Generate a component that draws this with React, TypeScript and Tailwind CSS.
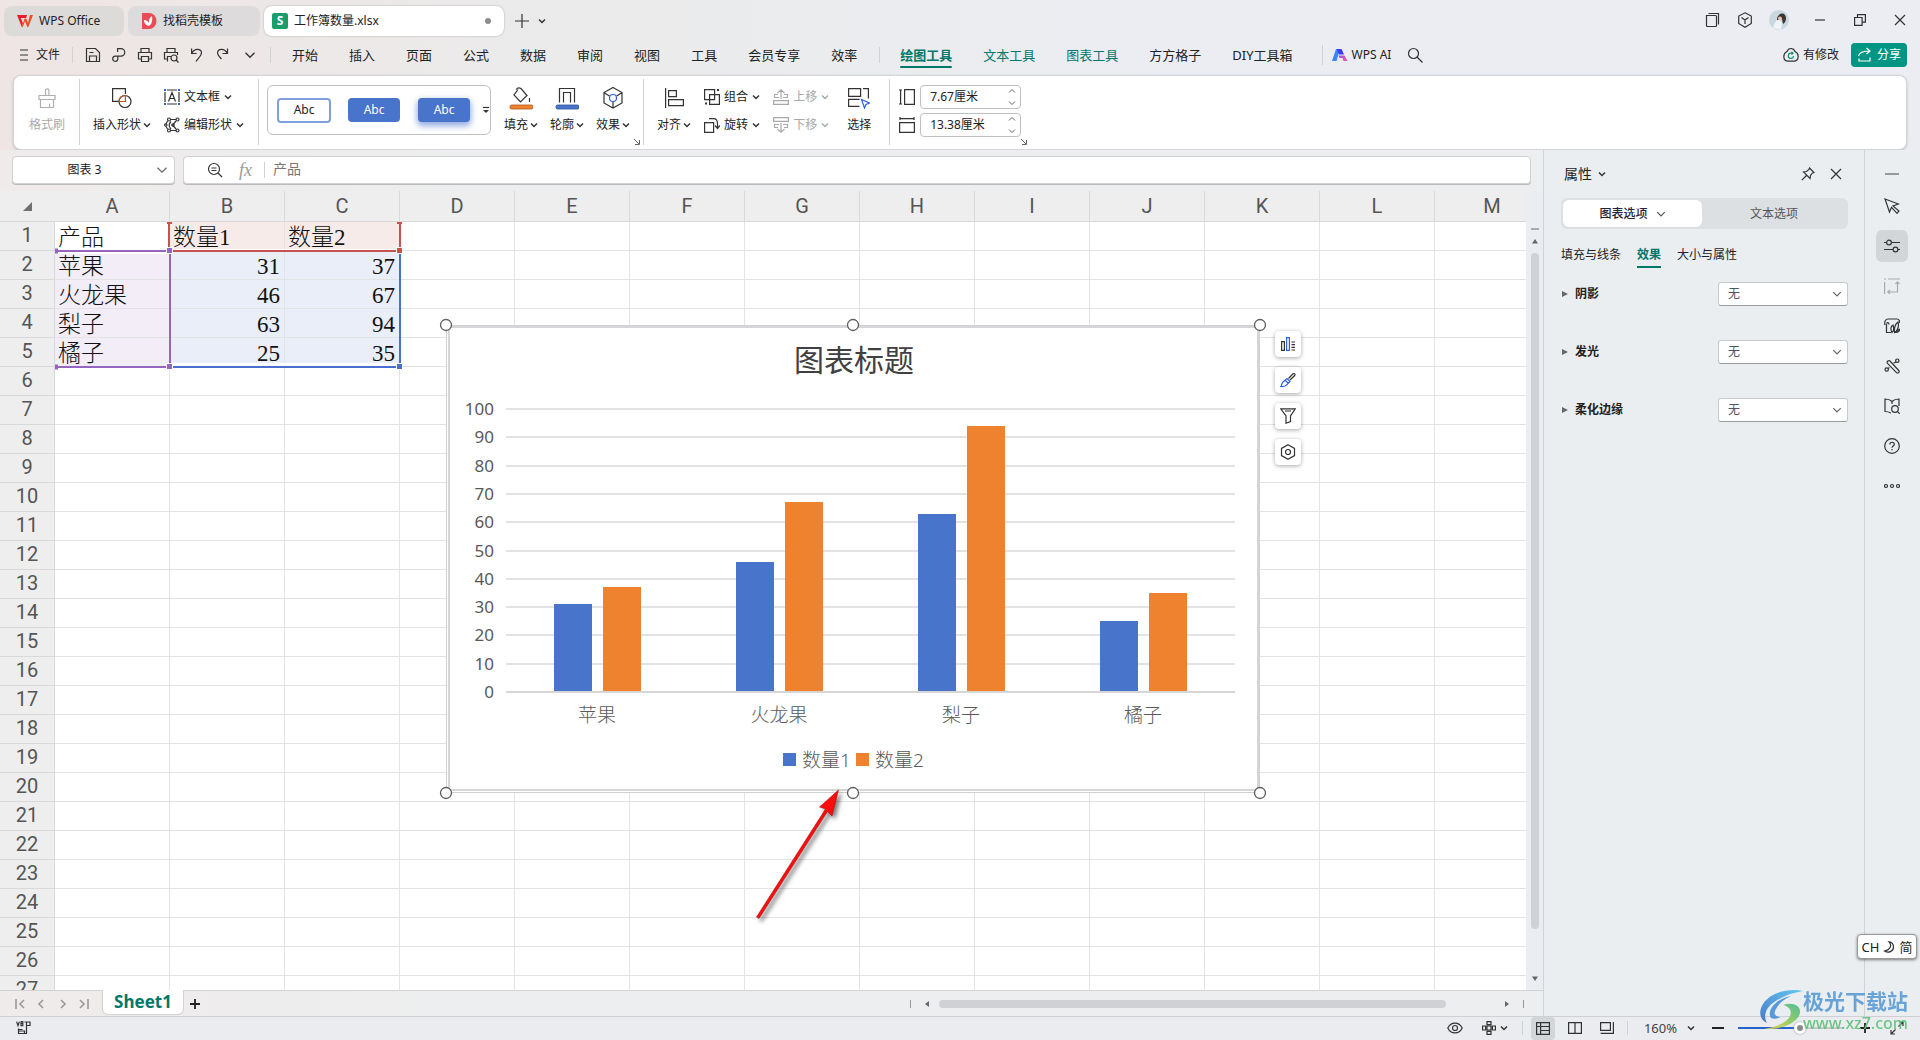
import React from "react";

type IcoProps = { w?: number; h?: number; box?: string; c?: string; sw?: number; children: React.ReactNode };
const Ico = ({ w = 16, h, box, c = "#333", sw = 1.2, children }: IcoProps) => (
  <svg
    width={w}
    height={h ?? w}
    viewBox={box ?? `0 0 ${w} ${h ?? w}`}
    fill="none"
    stroke={c}
    strokeWidth={sw}
    className="shrink-0"
    aria-hidden="true"
  >
    {children}
  </svg>
);
const Chev = ({ w = 8, c = "#333", sw = 1.5 }: { w?: number; c?: string; sw?: number }) => (
  <Ico w={w} box="0 0 8 8" c={c} sw={sw}>
    <path d="M1 2.5 4 5.5 7 2.5" />
  </Ico>
);
const VSep = ({ cls }: { cls: string }) => <span className={`w-px shrink-0 bg-[#d0d1d4] ${cls}`} />;

/* ---------- title bar ---------- */
const TitleBar = () => (
  <header className="flex h-[37px] shrink-0 pt-[6px] pl-1">
    <button className="flex h-[30px] w-[120px] items-center gap-[6px] rounded-lg bg-[#dddada] pl-[13px]">
      <Ico w={16} h={14} sw={0}>
        <path fill="#e5202b" d="M0 1h10L9.200 4H3.800l2.200 5.500L4.800 13 0 1Z" />
        <path fill="#f04a1e" d="M13 1h3l-4.700 12h-1L8 7l-2.200 6h-1L7.600 4.500h1.600L11 9l2-8Z" />
      </Ico>
      WPS Office
    </button>
    <button className="ml-1 flex h-[30px] w-[132px] items-center gap-[6px] rounded-lg bg-[#dddbdb] pl-[13px]">
      <Ico w={16} sw={0}>
        <path fill="#e84d54" d="M1 0h7a7.500 8 0 0 1 0 16H1Z" />
        <path fill="#fff" d="M8 13C4 12 3 9 3 7c2 0 4 1 5 3C7.500 7 8.500 4.500 11 3c.5 3 .5 8-3 10Z" />
      </Ico>
      找稻壳模板
    </button>
    <button className="ml-1 flex h-[30px] w-[240px] items-center gap-[6px] rounded-lg bg-white pr-[13px] pl-2 shadow-[0_0_2px_rgba(0,0,0,0.3)]">
      <span className="flex size-4 items-center justify-center rounded-[2px] bg-[#1a9c6b] text-[12px] leading-4 font-bold text-white">S</span>
      工作簿数量.xlsx
      <span className="ml-auto size-[6px] rounded-full bg-[#8d8d8d]" />
    </button>
    <button aria-label="新建" className="ml-[11px] flex h-[30px] items-center">
      <Ico w={14}><path d="M7 0v14M0 7h14" /></Ico>
    </button>
    <button aria-label="标签列表" className="ml-[9px] flex h-[30px] items-center"><Chev /></button>
    <div className="ml-auto flex h-[28px] items-center">
      <button aria-label="窗口"><Ico w={16}><path d="M3.500 1.500h10v11M1.500 3.500h9a1 1 0 0 1 1 1v9a1 1 0 0 1-1 1h-8a1 1 0 0 1-1-1Z" /></Ico></button>
      <button aria-label="应用" className="ml-4"><Ico w={16}><path d="M8 .8 14.300 4v7.500L8 15.200 1.700 11.500V4ZM4.500 5.500 8 8l3.500-2.500M8 8v4" /></Ico></button>
      <button aria-label="账户" className="ml-4">
        <Ico w={20} sw={0}>
          <circle cx="10" cy="10" r="10" fill="#c9d8de" />
          <path d="M10 5c3-3 7-1 7 3 0 3-1 5-3 6l-1-5-5 2c0-3 0-4 2-6Z" fill="#3d3434" />
          <path d="M8 10c2 0 4 0 5 4l-1 5.800L4 18c1-3 2-6 4-8Z" fill="#eef4f7" />
          <circle cx="11" cy="8.500" r="2" fill="#e7c4b5" />
        </Ico>
      </button>
      <button aria-label="最小化" className="ml-[25px]"><Ico w={12}><path d="M1 6h10" /></Ico></button>
      <button aria-label="还原" className="ml-[28px]"><Ico w={12}><path d="M.6 3.500h7.500v7.900H.6ZM3.500 3.500V.6h7.900v7.500H8" /></Ico></button>
      <button aria-label="关闭" className="mr-[14px] ml-[28px]"><Ico w={12}><path d="m1 1 10 10M11 1 1 11" /></Ico></button>
    </div>
  </header>
);

/* ---------- menu bar ---------- */
const menus = ["开始", "插入", "页面", "公式", "数据", "审阅", "视图", "工具", "会员专享", "效率"];

const MenuBar = () => (
  <nav className="flex h-[36px] shrink-0 items-center pl-5">
    <button className="flex items-center gap-2">
      <Ico w={8} h={12}><path d="M0 1h8M0 6h8M0 11h8" /></Ico>文件
    </button>
    <VSep cls="ml-3 h-4" />
    <div className="ml-3 flex items-center gap-[10px]">
      <button aria-label="保存"><Ico w={16}><path d="M1.500 1.500h9l4 4v9h-13ZM4.500 5.500h4M4.500 14v-5h7v5" /></Ico></button>
      <button aria-label="输出"><Ico w={16}><path d="M6.600 5V1.600h3.400a3.700 3.700 0 0 1 0 7.500H4.500a2.600 2.600 0 1 0 2.300 3.400V9.100" /></Ico></button>
      <button aria-label="打印"><Ico w={16}><path d="M4 5V1.500h8V5M4 12H1.500V5.500h13V12H12M4.500 9.500h7v5h-7Z" /></Ico></button>
      <button aria-label="打印预览"><Ico w={16}><path d="M4 5V1.500h8V5M4 12H1.500V5.500h13V8M4.500 14.500v-5H8" /><circle cx="11" cy="11" r="3" /><path d="m13 13 2.500 2.500" /></Ico></button>
      <button aria-label="撤销"><Ico w={16}><path d="M2.600 1.500v5h5M2.600 6.500C5.500 1 12 1.500 12.500 5.500c.3 3.500-3 5-5.500 9" /></Ico></button>
      <button aria-label="恢复"><Ico w={16}><path d="M12.500 1.500v5h-5M12.500 6.500C9.500 1 3 1.500 2.600 5.500 2.400 8 4 9.500 6.500 12" /></Ico></button>
      <button aria-label="更多" className="pl-[3px]"><Chev w={12} sw={0.9} /></button>
    </div>
    <VSep cls="ml-[14px] h-4" />
    <div className="ml-[21px] flex items-center gap-[31px] text-[13px]">
      {menus.map((m) => <button key={m} className="whitespace-nowrap">{m}</button>)}
    </div>
    <VSep cls="ml-[22px] h-4" />
    <div className="ml-5 flex items-center gap-[31px] text-[13px] whitespace-nowrap text-[#00796b]">
      <button className="relative font-bold">
        绘图工具
        <span className="absolute inset-x-0 -bottom-1 h-[2px] rounded bg-[#00796b]" />
      </button>
      <button>文本工具</button>
      <button>图表工具</button>
      <button className="text-[#222]">方方格子</button>
      <button className="text-[#222]">DIY工具箱</button>
    </div>
    <VSep cls="ml-[29px] h-5" />
    <button className="ml-[9px] flex items-center gap-1 whitespace-nowrap">
      <svg width="16" height="12" viewBox="0 0 16 12" aria-hidden="true">
        <defs>
          <linearGradient id="ai" x1="0" x2="1"><stop offset="0" stopColor="#8a5cf0" /><stop offset="1" stopColor="#ff4fa0" /></linearGradient>
        </defs>
        <path d="M4 0h4L4.500 12H0Z" fill="#3a86ff" />
        <path d="M5 0h4.500l2.500 5.500H7L5.500 2Z" fill="#3b3cf2" />
        <path d="M6.500 6.500h6L15.500 12h-4L10.500 9H7.500Z" fill="url(#ai)" />
      </svg>
      WPS AI
    </button>
    <button aria-label="搜索" className="ml-4"><Ico w={16}><circle cx="6.500" cy="6.500" r="5" /><path d="m10 10 5.500 5.500" /></Ico></button>
    <button className="ml-auto flex items-center gap-1 whitespace-nowrap">
      <Ico w={16}><path d="M8 1.500c2.500 0 3.500 1.500 4 3C14 5.500 15.200 7 15.200 9.500c0 3-2 4.700-4.200 4.700H5C2.500 14.200.8 12.500.8 9.500.8 7 2 5.500 4 4.500c.5-1.500 1.500-3 4-3Z" /><path stroke="#0a9a6e" d="M10.500 9A2.600 2.600 0 1 1 8 6.200h1.500M8.500 4.700 10 6.200 8.500 7.700" /></Ico>
      有修改
    </button>
    <button className="mr-[13px] ml-3 flex h-6 w-14 items-center justify-center gap-1 rounded bg-[#009683] whitespace-nowrap text-white">
      <Ico w={16} c="#fff"><path d="M1.500 9C2.500 5.500 6 4 12.500 4M9.500 1l3.500 3-3.500 3M2 11.500V14h11v-3.500" /></Ico>
      分享
    </button>
  </nav>
);

/* ---------- ribbon ---------- */
const Big = ({ icon, label, drop, cls, off }: { icon: React.ReactNode; label: string; drop?: boolean; cls: string; off?: boolean }) => (
  <button className={`flex shrink-0 flex-col items-center pt-[3px] ${cls} ${off ? "text-[#a9a9a9]" : ""}`}>
    <span className="flex h-6 items-center justify-center">{icon}</span>
    <span className="mt-[6px] flex h-[18px] items-center gap-[2px] whitespace-nowrap">{label}{drop && <Chev />}</span>
  </button>
);
const Small = ({ icon, label, off }: { icon: React.ReactNode; label: string; off?: boolean }) => (
  <button className={`flex h-7 items-center gap-1 whitespace-nowrap ${off ? "text-[#a9a9a9]" : ""}`}>
    {icon}{label}<Chev c={off ? "#a9a9a9" : "#333"} />
  </button>
);
const Corner = () => <Ico w={6} c="#666" sw={1}><path d="m0 0 5 5M5.500 1v4.500H1" /></Ico>;
const Size = ({ icon, label, value }: { icon: React.ReactNode; label: string; value: string }) => (
  <div className="flex h-7 items-center gap-[5px]">
    {icon}
    <div className="flex h-6 w-[101px] items-center rounded border border-[#bfc0c2] bg-white pr-1 pl-[9px]">
      <input aria-label={label} defaultValue={value} className="w-0 flex-1 outline-none" />
      <span className="flex flex-col gap-1">
        <button aria-label="增加" className="rotate-180"><Chev w={8} c="#666" sw={1} /></button>
        <button aria-label="减少"><Chev w={8} c="#666" sw={1} /></button>
      </span>
    </div>
  </div>
);

const Ribbon = () => (
  <section className="mx-[13px] mt-[2px] flex h-[75px] shrink-0 rounded-lg border border-[#d4d5d8] bg-white pt-[7px] pl-[15px] shadow-[0_1px_3px_rgba(0,0,0,0.18)]">
    <Big cls="" off label="格式刷" icon={<Ico w={20} h={22} c="#b0b0b0"><path d="M2 8.500h16v4H2ZM3.500 12.500v8h13v-8M8.500 8V3.500a1.700 1.700 0 0 1 3.400 0V8M12.500 20v-3.500" /></Ico>} />
    <VSep cls="-mt-1 ml-[14px] h-[66px]" />
    <Big cls="ml-[13px]" drop label="插入形状" icon={<Ico w={22}><path d="M8 14.400H1.600V1.600h12.800V7" /><circle cx="14" cy="14.500" r="6" /><path stroke="#c8551b" d="M14.400 8.500v6H8.200c0-3.500 2.500-6 6.200-6Z" /></Ico>} />
    <div className="ml-[13px]">
      <Small label="文本框" icon={<Ico w={16}><path d="M1 3v10M15 3v10M3 1h10M3 15h10M4.500 12.500 8 3.500l3.500 9M5.800 9.500h4.400" /><path stroke="#2f62e0" strokeWidth="2" d="M0 1h2M14 1h2M0 15h2M14 15h2" /></Ico>} />
      <Small label="编辑形状" icon={<Ico w={16}><path d="M6 2.500h6.500M6 13.500h6.500M3.500 4 2 7M3.500 12 2 9.500M12 4l-3 3.500v1L12 12M7 4.500C4.500 7 4.500 9.500 7 12" /><circle cx="5" cy="2.500" r="1.500" /><circle cx="13.500" cy="2.500" r="1.500" /><circle cx="1.800" cy="8" r="1.200" /><circle cx="5" cy="13.500" r="1.500" /><circle cx="13.500" cy="13.500" r="1.500" /><circle cx="9" cy="8" r="1.200" /></Ico>} />
    </div>
    <VSep cls="-mt-1 ml-[14px] h-[66px]" />
    <div className="mt-[2px] ml-2 flex h-[50px] w-[224px] shrink-0 items-center rounded-md border border-[#bfc0c2] pl-[9px]">
      <button className="h-[25px] w-[54px] rounded border-2 border-[#7f9fdf] bg-white">Abc</button>
      <button className="ml-[17px] h-6 w-[52px] rounded bg-[#4874cb] text-white">Abc</button>
      <button className="ml-[18px] h-6 w-[52px] rounded bg-[#4874cb] text-white shadow-[0_3px_6px_1px_rgba(72,116,203,0.6)]">Abc</button>
      <button aria-label="更多样式" className="ml-3"><Ico w={8}><path d="M1 1.500h6" /><path d="M1 4h6L4 7Z" fill="#333" stroke="none" /></Ico></button>
    </div>
    <Big cls="ml-[13px]" drop label="填充" icon={<Ico w={24}><path d="M9 3.500 5 9l6.500 7 6.500-6.500L12 2.500Q9 1 7 3.500M20.500 12v4" /><rect x="1" y="19" width="23" height="4" rx="1.500" fill="#f08131" stroke="#a85a1c" strokeWidth=".8" /></Ico>} />
    <Big cls="ml-3" drop label="轮廓" icon={<Ico w={24}><path d="M4.500 16.500v-14h15v14M8.500 16.500v-10h7v10" /><rect x="1" y="19" width="23" height="4" rx="1.500" fill="#4874cb" stroke="#2f4f94" strokeWidth=".8" /></Ico>} />
    <Big cls="ml-3" drop label="效果" icon={<Ico w={22} h={24}><path d="m11 1.500 9 5v10.500l-9 5-9-5V6.500ZM2.500 7l5 3M19.500 7l-5 3M11 15.500v6" /><circle cx="11" cy="12" r="3.500" stroke="#2f62e0" /></Ico>} />
    <div className="flex w-[13px] items-end justify-center pb-1"><Corner /></div>
    <VSep cls="-mt-1 h-[66px]" />
    <Big cls="ml-[13px]" drop label="对齐" icon={<Ico w={20}><path d="M1.600 0v20M4.600 2.600h7.800v6H4.600ZM4.600 11.600h14.800v6H4.600Z" /></Ico>} />
    <div className="ml-[13px]">
      <Small label="组合" icon={<Ico w={16}><path d="M.6.6h10v10H.6ZM5.600 5.600h9.800v9.800H5.600Z" /><path strokeWidth="2" d="M13 1h2M1 14.500h2" /></Ico>} />
      <Small label="旋转" icon={<Ico w={16}><path d="M.6 5.600h9v9.800h-9ZM5 1.600h4.500c3 0 4 2 4 5V11M11 8.500l2.500 3 2.500-3" /></Ico>} />
    </div>
    <div className="ml-[13px]">
      <Small off label="上移" icon={<Ico w={16} c="#a9a9a9"><path d="M.6 11.600h14.800v3.800H.6ZM6 8.500H1.500v-3H5M10 8.500h4.500v-3H11M8 10V1M4.500 4 8 .8 11.500 4" /></Ico>} />
      <Small off label="下移" icon={<Ico w={16} c="#a9a9a9"><path d="M.6.6h14.800v3.800H.6ZM6 7.500H1.500v3H5M10 7.500h4.500v3H11M8 6v9M4.500 12 8 15.200l3.500-3.200" /></Ico>} />
    </div>
    <Big cls="ml-[18px]" label="选择" icon={<Ico w={22}><path d="M.6 9.400V1.600h12v7.800ZM15 1.600h5.400v10M11.500 19.400H.6v-7h11" /><path d="m13.500 12.500 8 3.500-3.500 1.500-1.500 3.500Z" stroke="#2f62e0" /></Ico>} />
    <VSep cls="-mt-1 ml-[18px] h-[66px]" />
    <div className="ml-[9px]">
      <Size label="高度" value="7.67厘米" icon={<Ico w={16}><path d="M1.600 1v14M5.600.6h9.800v14.800H5.600ZM0 1h3M0 15h3" /></Ico>} />
      <Size label="宽度" value="13.38厘米" icon={<Ico w={16}><path d="M1 1.600h14M.6 5.600h14.800v9.800H.6ZM1 0v3M15 0v3" /></Ico>} />
    </div>
    <div className="flex items-end pb-1"><Corner /></div>
  </section>
);

/* ---------- formula bar ---------- */
const FormulaBar = () => (
  <div className="mt-[6px] flex h-7 shrink-0 gap-2 pr-3 pl-3">
    <div className="flex w-[163px] items-center rounded border border-[#d0d1d3] bg-white pr-[6px] shadow-[0_1px_0_#bbb]">
      <input aria-label="名称框" defaultValue="图表 3" className="w-0 flex-1 text-center outline-none" />
      <button aria-label="展开"><Chev w={12} c="#666" sw={0.8} /></button>
    </div>
    <div className="flex flex-1 items-center rounded border border-[#d0d1d3] bg-white pl-[23px] text-[#777] shadow-[0_1px_0_#bbb]">
      <Ico w={16}><circle cx="7" cy="7" r="5.500" /><path d="m11 11 4 4M4.500 6h5M4.500 8.500h5" /></Ico>
      <span className="ml-4 font-['Liberation_Serif'] text-[18px] italic text-[#999]">fx</span>
      <VSep cls="ml-3 h-4" />
      <input aria-label="编辑栏" defaultValue="产品" className="ml-2 flex-1 pb-[2px] text-[14px] outline-none" />
    </div>
  </div>
);

/* ---------- sheet ---------- */
const columns = ["A", "B", "C", "D", "E", "F", "G", "H", "I", "J", "K", "L", "M"];
const cells: string[][] = [
  ["产品", "数量1", "数量2"],
  ["苹果", "31", "37"],
  ["火龙果", "46", "67"],
  ["梨子", "63", "94"],
  ["橘子", "25", "35"],
];
const tint = (r: number, c: number) => {
  if (c > 2 || r > 4) return "";
  if (r === 0) return c === 0 ? "" : "bg-[#f7ebea]";
  return c === 0 ? "bg-[#f2edf7]" : "bg-[#e9eef9]";
};

const Grid = () => (
  <table className="w-[1550px] table-fixed border-separate border-spacing-0">
    <colgroup>
      <col className="w-[55px]" />
      {columns.map((c) => <col key={c} className="w-[115px]" />)}
    </colgroup>
    <thead>
      <tr className="h-[31px] bg-[#eeeeee] font-[Roboto,sans-serif] text-[20px] leading-6 text-[#555]">
        <th className="border-b border-[#d8d9da]" aria-label="全选">
          <span className="ml-[23px] block size-0 border-b-[9px] border-l-[9px] border-b-[#707070] border-l-transparent" />
        </th>
        {columns.map((c) => (
          <th key={c} scope="col" className="border-r border-b border-[#d8d9da] p-0 font-normal">{c}</th>
        ))}
      </tr>
    </thead>
    <tbody>
      {Array.from({ length: 27 }, (_, r) => (
        <tr key={r} className="h-[29px]">
          <th scope="row" className="border-r border-b border-[#d8d9da] bg-[#eeeeee] p-0 pb-[2px] font-[Roboto,sans-serif] text-[20px] leading-6 font-normal text-[#555]">{r + 1}</th>
          {columns.map((c, i) => {
            const v = cells[r]?.[i] ?? "";
            return (
              <td key={c} className={`overflow-hidden border-r border-b border-[#e2e3e5] pt-1 pr-1 pb-0 pl-[3px] font-['Liberation_Serif','Noto_Sans_CJK_SC',serif] text-[23px] leading-6 font-light whitespace-nowrap text-[#111] ${tint(r, i)} ${/^\d/.test(v) ? "text-right" : ""}`}>{v}</td>
            );
          })}
        </tr>
      ))}
    </tbody>
  </table>
);

/* coloured outlines of the ranges that feed the chart */
const Ranges = () => (
  <svg className="pointer-events-none absolute top-0 left-0" width="420" height="190" fill="none" aria-hidden="true">
    <path d="M56 61h113M173 174h226" stroke="#fff" strokeWidth="4" />
    <path d="M400 60v116" stroke="#4a6fd0" strokeWidth="2" />
    <path d="M173 176h228" stroke="#4a6fd0" strokeWidth="2" />
    <path d="M169 32v25M400 32v25M173 60h226" stroke="#c8504f" strokeWidth="2" />
    <path d="M173 58.500h223" stroke="#fff" />
    <path d="M56 60h110M170 62v111M56 176h110" stroke="#9466c0" strokeWidth="2" />
    <path d="M55 60h3M55 176h3" stroke="#9466c0" strokeWidth="5" />
    <path d="M167 32h5M397 32h5" stroke="#c8504f" strokeWidth="2" />
    <g stroke="#fff">
      <rect x="166.500" y="56.500" width="6" height="6" fill="#9466c0" />
      <rect x="166.500" y="172.500" width="6" height="6" fill="#9466c0" />
      <rect x="396.500" y="56.500" width="6" height="6" fill="#c8504f" />
      <rect x="396.500" y="172.500" width="6" height="6" fill="#4a6fd0" />
    </g>
  </svg>
);

const series = [
  { name: "苹果", a: 31, b: 37 },
  { name: "火龙果", a: 46, b: 67 },
  { name: "梨子", a: 63, b: 94 },
  { name: "橘子", a: 25, b: 35 },
];
const yOf = (v: number) => Math.round(367 - v * 2.83);

const Chart = () => (
  <svg className="absolute top-[134px] left-[446px] overflow-visible" width="814" height="468" role="img" aria-label="图表标题">
    <rect x=".5" y=".5" width="813" height="467" fill="#fff" stroke="#cfd0d3" />
    <rect x="3" y="2" width="809" height="463" fill="#fff" stroke="#d6d6d8" strokeWidth="2" />
    <text x="408" y="46" textAnchor="middle" fontSize="30" fill="#404040">图表标题</text>
    {Array.from({ length: 11 }, (_, i) => (
      <g key={i}>
        <rect x="60" y={yOf(i * 10) - 1} width="729" height="2" fill={i ? "#e3e3e3" : "#d6d6d6"} />
        <text x="48" y={yOf(i * 10) + 6} textAnchor="end" fontSize="17" fill="#595959">{i * 10}</text>
      </g>
    ))}
    {series.map((s, i) => (
      <g key={s.name}>
        <rect x={108 + i * 182} y={yOf(s.a)} width="38" height={366 - yOf(s.a)} fill="#4874cb" />
        <rect x={157 + i * 182} y={yOf(s.b)} width="38" height={366 - yOf(s.b)} fill="#ee822f" />
        <text x={151 + i * 182} y="397" textAnchor="middle" fontSize="19" fontWeight="300" fill="#595959">{s.name}</text>
      </g>
    ))}
    <g fontSize="19" fontWeight="300" fill="#595959">
      <rect x="337" y="428" width="13" height="13" fill="#4874cb" />
      <text x="356" y="442">数量1</text>
      <rect x="410" y="428" width="13" height="13" fill="#ee822f" />
      <text x="429" y="442">数量2</text>
    </g>
    <g fill="#fff" stroke="#5c5c5c" strokeWidth="1.300">
      {[0, 407, 814].map((x) => <circle key={x} cx={x} cy="0" r="5.500" />)}
      {[0, 407, 814].map((x) => <circle key={x} cx={x} cy="468" r="5.500" />)}
    </g>
  </svg>
);

const Pointer = () => (
  <svg className="pointer-events-none absolute top-[597px] left-[750px] overflow-visible" width="100" height="140" aria-hidden="true">
    <g className="[filter:drop-shadow(3px_3px_2px_rgba(0,0,0,0.5))]">
      <path d="M88.500 2 82 28l-4.500-4.500L9 130.500 6.500 129 75.500 21l-6-2Z" fill="#fb0d0d" stroke="#a11" strokeWidth=".6" />
    </g>
  </svg>
);

const tool = "flex size-[26px] items-center justify-center rounded bg-white shadow-[0_1px_4px_rgba(0,0,0,0.35)]";
const ChartTools = () => (
  <div className="absolute top-[140px] left-[1275px] flex flex-col gap-[10px]">
    <button aria-label="图表元素" className={tool}><Ico w={16}><path d="M1.600 5.600h2.800v8.800H1.600ZM11.500 6H15M11.500 8.700H15M11.500 11.400H15M11.500 14H15" /><path stroke="#2f62e0" d="M6.600 1.600h2.800v12.800H6.600Z" /></Ico></button>
    <button aria-label="图表样式" className={tool}><Ico w={16}><path d="M8.500 6.500 13 1.800c1.500-.8 2.500.5 1.700 1.700L10 8" /><path stroke="#2f62e0" d="M.8 14.500c1-1 .5-3 2.200-4.500l4-3.500 3 3-3.500 3.500c-1.500 2-4 1.500-5.700 1.500ZM5 8l3.500 3.500" /></Ico></button>
    <button aria-label="图表筛选" className={tool}><Ico w={16}><path d="M.8.800h14.400L10.500 8v5.500L6 15.200V8ZM5 3h6" /></Ico></button>
    <button aria-label="图表设置" className={tool}><Ico w={16}><path d="m8 .8 6.500 3.600v7.200L8 15.200l-6.500-3.600V4.400Z" /><circle cx="8" cy="8" r="2.500" /></Ico></button>
  </div>
);

const Tri = ({ d }: { d: string }) => <Ico w={8} sw={0}><path d={d} fill="#666" /></Ico>;

const Sheet = () => (
  <div className="mt-[7px] flex min-h-0 flex-1">
    <div className="relative min-w-0 flex-1 overflow-hidden bg-white">
      <Grid />
      <Ranges />
      <Chart />
      <ChartTools />
      <Pointer />
    </div>
    <div className="flex w-[17px] shrink-0 flex-col items-center bg-[#eaedf2] pt-[30px] pb-[7px]">
      <span className="mt-[7px] h-[2px] w-2 bg-[#a9abae]" />
      <span className="mt-[7px]"><Tri d="M1 6.500h6L4 2Z" /></span>
      <span className="mt-2 mb-[46px] w-2 flex-1 rounded-full bg-[#cfd1d4]" />
      <Tri d="M1 1.500h6L4 6Z" />
    </div>
  </div>
);

const SheetTabs = () => (
  <div className="flex h-[26px] shrink-0 items-center border-t border-[#d2d3d5]">
    <div className="ml-[15px] flex items-center gap-[11px]">
      <button aria-label="第一张"><Ico w={10} c="#999" sw={1.6}><path d="M1 0v10M9 1 5 5l4 4" /></Ico></button>
      <button aria-label="上一张"><Ico w={10} c="#999" sw={1.6}><path d="M7 1 3 5l4 4" /></Ico></button>
      <button aria-label="下一张" className="ml-px"><Ico w={10} c="#999" sw={1.6}><path d="m3 1 4 4-4 4" /></Ico></button>
      <button aria-label="最后一张"><Ico w={10} c="#999" sw={1.6}><path d="M9 0v10M1 1l4 4-4 4" /></Ico></button>
    </div>
    <button className="-mt-px ml-[13px] flex h-[25px] w-[82px] items-center justify-center self-start rounded-b-md border-x border-b border-[#d2d3d5] bg-white text-[17px] font-bold text-[#00796b]">Sheet1</button>
    <button aria-label="新建工作表" className="ml-[6px]"><Ico w={10} c="#222" sw={1.8}><path d="M5 0v10M0 5h10" /></Ico></button>
    <div className="mr-[19px] ml-auto flex w-[614px] items-center">
      <span className="h-2 w-px bg-[#999]" />
      <span className="ml-3"><Tri d="M6 1v6L2 4Z" /></span>
      <span className="ml-2 h-2 w-[507px] rounded-full bg-[#cfd1d4]" />
      <span className="ml-auto"><Tri d="M2 1v6l4-3Z" /></span>
      <span className="ml-3 h-2 w-px bg-[#999]" />
    </div>
  </div>
);

/* ---------- property panel ---------- */
const effects = ["阴影", "发光", "柔化边缘"];
const Panel = () => (
  <aside className="w-[321px] shrink-0 border-l border-[#d0d2d5] bg-[#eaeef1] pr-4 pl-[17px]">
    <div className="mt-[14px] flex h-5 items-center">
      <h2 className="ml-[3px] text-[14px]">属性</h2>
      <button aria-label="面板菜单" className="ml-[6px]"><Chev /></button>
      <button aria-label="固定" className="ml-auto"><Ico w={14}><path d="m8.500 1 4.500 4.500-1.500.5-2 2.500-.5 3L2.500 5l3-.5L8 2.500ZM5.500 8.500.8 13.200" /></Ico></button>
      <button aria-label="关闭面板" className="mr-[6px] ml-[15px]"><Ico w={12}><path d="m1 1 10 10M11 1 1 11" /></Ico></button>
    </div>
    <div className="mt-[14px] flex h-[31px] rounded-md bg-[#dde0e3] p-[2px]">
      <button className="flex w-[139px] items-center justify-center gap-2 rounded-md bg-white font-medium text-[#223]">
        图表选项<Chev w={10} c="#555" sw={1} />
      </button>
      <button className="flex-1 text-[#555]">文本选项</button>
    </div>
    <div className="mt-[15px] flex h-6 gap-4">
      <button className="h-[22px]">填充与线条</button>
      <button className="h-6 border-b-2 border-[#00796b] font-bold text-[#00796b]">效果</button>
      <button className="h-[22px]">大小与属性</button>
    </div>
    <div className="mt-[14px] flex flex-col gap-[34px]">
      {effects.map((e) => (
        <label key={e} className="flex h-6 items-center font-bold">
          <Tri d="M1 1v6l6-3Z" />
          <span className="ml-[6px]">{e}</span>
          <span className="relative ml-auto">
            <select className="block h-6 w-[130px] appearance-none rounded-[3px] border border-[#c8cacd] border-b-[#9a9c9f] bg-white pl-[9px] font-normal text-[#4a5568]">
              <option>无</option>
            </select>
            <span className="pointer-events-none absolute top-[7px] right-[6px]"><Chev w={10} c="#666" sw={1} /></span>
          </span>
        </label>
      ))}
    </div>
  </aside>
);

const railItems: { name: string; icon: React.ReactNode; c?: string }[] = [
  { name: "选择工具", icon: <path d="m1 1 13.500 5-5.500 2 6 5-2 2.300-5.500-6L5.500 14Z" /> },
  { name: "属性", icon: <><path d="M0 4.500h2.500M7.500 4.500H16M0 11.500h9M14 11.500h2" /><circle cx="5" cy="4.500" r="2.400" /><circle cx="11.500" cy="11.500" r="2.400" /></> },
  { name: "变换", c: "#aaa", icon: <path d="M.6 4v12M4 1h12M0 1h2M13.500 4v10H4M11.500 6l2-2.200 2 2.200M6 12l-2.200 2L6 16" /> },
  { name: "素材", icon: <><path d="M2.500 6v8.500H7M1 7C0 3 2 1 4 1h9c2 0 3 2 2.500 4M5 6.500C5 5 3.500 4 2.500 5.500" /><path d="M8 14.500C6 11 7 8 9 7c1 3 1 6-1 7.500ZM10.500 14.500C10 11 11 6 14 4c1 4 0 8-3.500 10.500ZM12 14.500c1-2 2-3 4-3.500-.5 2-2 3.500-4 3.500Z" /></> },
  { name: "工具", icon: <><path d="M3.300 5.200 12.500 14.600a1.500 1.500 0 0 0 2.200-2.100L6 3a1.800 1.800 0 0 0-2.700 2.200Z" /><circle cx="13.300" cy="2.700" r="1.700" /><circle cx="2.700" cy="11.500" r="1.700" /><path d="M12 4 9.500 5.200M4 10.500l1.500-1" /></> },
  { name: "查找", icon: <><path d="M8 3.500C6 1.500 3 1 1 1v12.500c2 0 4 .5 6 1.500M8 3.500c2-2 5-2.500 7-2.500v7M8 3.500V6" /><circle cx="11" cy="11" r="3.300" /><path d="m13.300 13.300 2.500 2.500" /></> },
  { name: "帮助", icon: <><circle cx="8" cy="8" r="7.300" /><path d="M5.800 6.500c0-3 4.500-3 4.500 0 0 1.500-2.300 1.700-2.300 3.300M8 11v1.300" /></> },
  { name: "更多", icon: <><circle cx="2" cy="8" r="1.500" /><circle cx="8" cy="8" r="1.500" /><circle cx="14" cy="8" r="1.500" /></> },
];
const Rail = () => (
  <div className="flex w-14 shrink-0 flex-col items-center gap-2 border-l border-[#d0d2d5] bg-[#ebeef1] pt-[23px] pr-px">
    <button aria-label="收起" className="-mb-[1px] flex h-[10px] items-start"><span className="h-[2px] w-[14px] bg-[#999]" /></button>
    {railItems.map((r) => (
      <button key={r.name} aria-label={r.name} className={`flex size-8 items-center justify-center rounded-md ${r.name === "属性" ? "bg-[#d3d6d9]" : ""}`}>
        <Ico w={16} c={r.c}>{r.icon}</Ico>
      </button>
    ))}
  </div>
);

/* ---------- status bar ---------- */
const StatusBar = () => (
  <footer className="flex h-6 shrink-0 items-center border-t border-[#cfd0d3] bg-[#ebecf0] pr-4 pb-px pl-4">
    <button aria-label="宏"><Ico w={16} h={14}><path d="m.6.600 1.400 4 1.400-4M5 .6v4h1.800v-4H5M5 2.500h1.800M8.500 1H14v3.500h-3M10.500 1v11.500H3M2.500 7.500v5h6V10h-6M2.500 8.500h4" /></Ico></button>
    <div className="ml-auto flex items-center">
      <button aria-label="阅读模式"><Ico w={16}><path d="M.8 8C4 1.500 12 1.500 15.200 8 12 14.500 4 14.500.8 8Z" /><circle cx="8" cy="8" r="2.500" /></Ico></button>
      <button aria-label="定位" className="ml-[19px] flex items-center gap-1"><Ico w={14}><path d="M5 .6h4v3H5ZM5 10.400h4v3H5ZM.6 5h3v4h-3ZM10.400 5h3v4h-3ZM5 5h4v4H5Z" /></Ico><Chev /></button>
      <VSep cls="ml-[14px] h-[14px]" />
      <button aria-label="普通视图" className="ml-2 flex h-[23px] w-6 items-center justify-center rounded bg-[#d3d6d9]"><Ico w={14} h={13}><path d="M.6.600h12.800v11.800H.6ZM.6 4.500h12.800M4.600.600v11.800M4.600 8.500h8.800" /></Ico></button>
      <button aria-label="分页预览" className="ml-[13px]"><Ico w={14} h={12}><path d="M.6.600h12.800v10.800H.6ZM7 .6v11" /></Ico></button>
      <button aria-label="页面布局" className="ml-[18px]"><Ico w={14} h={12}><path d="M.6.600h9.800v7.800H.6ZM13.400 0v11.400H.6" /></Ico></button>
      <VSep cls="ml-[13px] h-[14px]" />
      <button className="ml-4 flex items-center gap-[10px] text-[13px] text-[#444]">160%<Chev /></button>
      <button aria-label="缩小" className="ml-[17px]"><Ico w={12} c="#222" sw={2}><path d="M0 6h12" /></Ico></button>
      <input aria-label="缩放" type="range" min="0" max="100" defaultValue="60" className="ml-[14px] h-[2px] w-[106px] appearance-none bg-linear-to-r from-[#2462d0] from-60% to-[#c5c8cc] to-60% [&::-webkit-slider-thumb]:size-3 [&::-webkit-slider-thumb]:appearance-none [&::-webkit-slider-thumb]:rounded-full [&::-webkit-slider-thumb]:border-[3px] [&::-webkit-slider-thumb]:border-white [&::-webkit-slider-thumb]:bg-[#8a8a8a] [&::-webkit-slider-thumb]:shadow-[0_0_2px_#888]" />
      <button aria-label="放大" className="ml-4"><Ico w={10} c="#222" sw={1.8}><path d="M5 0v10M0 5h10" /></Ico></button>
      <button aria-label="全屏" className="ml-5"><Ico w={14}><path d="M9 1h4v4M13 1 8.500 5.500M5 13H1V9M1 13l4.500-4.500" /></Ico></button>
    </div>
  </footer>
);

const Watermark = () => (
  <div className="pointer-events-none absolute right-3 bottom-[7px] flex opacity-90">
    <svg width="44" height="42" viewBox="0 0 44 42" aria-hidden="true">
      <defs>
        <linearGradient id="wb" x1="0" y1="1" x2="1" y2="0"><stop offset="0" stopColor="#3b6fc4" /><stop offset="1" stopColor="#54c3f0" /></linearGradient>
        <linearGradient id="wg" x1="0" y1="1" x2="1" y2="0"><stop offset="0" stopColor="#f3d34a" /><stop offset=".5" stopColor="#8fc95a" /><stop offset="1" stopColor="#3fb98c" /></linearGradient>
      </defs>
      <path d="M44 2C30-1 12 3 4 15-1 23 1 31 8 34c-4-7-1-15 6-20C22 8 32 4 44 2Z" fill="url(#wb)" />
      <path d="M32 7C20 9 9 18 11 27c1 4 6 3 11 1-6 0-8-3-5-8 3-6 8-10 15-13Z" fill="#4a90d9" />
      <path d="M24 16c9-3 18 0 17 8C39 34 22 41 5 40c11-2 23-6 26-13 2-5 0-9-7-11Z" fill="url(#wg)" />
    </svg>
    <div className="flex flex-col font-bold whitespace-nowrap">
      <span className="text-[21px] leading-[24px] text-[#5b9bd5]">极光下载站</span>
      <span className="text-[16px] leading-[20px] font-medium text-[#5fc27a]">www.xz7.com</span>
    </div>
  </div>
);

export default function App() {
  return (
    <div className="relative flex h-screen flex-col overflow-hidden bg-[#ebecf0] bg-linear-to-r from-[#eee5e4] via-[#ebebeb] via-30% to-[#ebedf2] to-60% font-['Noto_Sans','Noto_Sans_CJK_SC',sans-serif] text-[12px] leading-[18px] text-[#222]">
      <TitleBar />
      <MenuBar />
      <Ribbon />
      <div className="flex min-h-0 flex-1">
        <main className="flex min-w-0 flex-1 flex-col bg-linear-to-r from-[#efebea] to-[#edeeef] to-30%">
          <FormulaBar />
          <Sheet />
          <SheetTabs />
        </main>
        <Panel />
        <Rail />
      </div>
      <StatusBar />
      <div className="absolute right-[3px] bottom-[81px] flex h-[25px] w-[60px] items-center justify-center gap-1 rounded border border-[#999] bg-white text-[13px] shadow-[0_1px_3px_rgba(0,0,0,0.5)]">
        CH<Ico w={12}><path d="M6 .8c3 3 2 8-4.500 9.200 4 2.500 9 .5 9-4C10.500 3 8.500 1 6 .8Z" /></Ico>简
      </div>
      <Watermark />
    </div>
  );
}
